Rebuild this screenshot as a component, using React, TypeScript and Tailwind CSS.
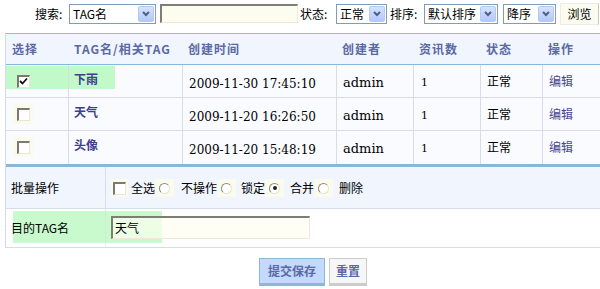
import React from "react";

const cjk = { fontFamily: '"Noto Sans CJK SC", "DejaVu Sans", sans-serif' };
const serif = { fontFamily: '"DejaVu Serif", "Liberation Serif", serif' };

function Select({ label, w }: { label: string; w: string }) {
  return (
    <div className={`${w} h-[20px] border border-[#7f9db9] bg-white flex items-center justify-between pl-[3px] pr-[1px]`}>
      <span className="text-[12px] text-black leading-none" style={cjk}>{label}</span>
      <div className="w-[16px] h-[16px] rounded-[2px] border border-[#b6c9f3] bg-gradient-to-b from-[#d7e3fd] to-[#b3c8f7] flex items-center justify-center">
        <svg width="8" height="6" viewBox="0 0 8 6">
          <path d="M1 1 L4 4 L7 1" stroke="#4d6185" strokeWidth="2" fill="none" />
        </svg>
      </div>
    </div>
  );
}

function Box({ checked }: { checked?: boolean }) {
  return (
    <div className="w-[13px] h-[13px] border-t-2 border-l-2 border-[#7a7a72] border-r border-b border-r-[#e6e6dc] border-b-[#e6e6dc] bg-white flex items-center justify-center">
      {checked && (
        <svg width="9" height="9" viewBox="0 0 9 9">
          <path d="M1 4 L3.5 6.5 L8 1.5" stroke="#111" strokeWidth="1.8" fill="none" />
        </svg>
      )}
    </div>
  );
}

function Radio({ checked }: { checked?: boolean }) {
  return (
    <div className="w-[19px] h-[18px] bg-[#fbfbec] flex items-center justify-center">
      <div className="w-[11px] h-[11px] rounded-full border-[1.5px] border-t-[#8a8a80] border-l-[#8a8a80] border-r-[#e2e2d8] border-b-[#e2e2d8] bg-white flex items-center justify-center">
        {checked && <div className="w-[4px] h-[4px] rounded-full bg-[#222]" />}
      </div>
    </div>
  );
}

const rows = [
  { name: "下雨", date: "2009-11-30 17:45:10", checked: true },
  { name: "天气", date: "2009-11-20 16:26:50", checked: false },
  { name: "头像", date: "2009-11-20 15:48:19", checked: false },
];

export default function App() {
  return (
    <div className="w-[600px] h-[289px] bg-white overflow-hidden text-[12px] text-black" style={cjk}>
      {/* search bar */}
      <div className="h-[33px] flex items-start pt-[4px] pl-[35px]">
        <span className="w-[34px] h-[20px] flex items-center leading-none">搜索:</span>
        <Select label="TAG名" w="w-[87px]" />
        <div className="ml-[4px] w-[138px] h-[19px] border-t-2 border-l-2 border-[#7d7d75] border-r border-b border-r-[#ecebd9] border-b-[#ecebd9] bg-[#fdfdef]" />
        <span className="ml-[2px] w-[36px] h-[20px] flex items-center leading-none">状态:</span>
        <Select label="正常" w="w-[51px]" />
        <span className="ml-[3px] w-[34px] h-[20px] flex items-center leading-none">排序:</span>
        <Select label="默认排序" w="w-[74px]" />
        <div className="ml-[5px]">
          <Select label="降序" w="w-[53px]" />
        </div>
        <div className="ml-[4px] -mt-[1px] w-[39px] h-[22px] bg-[#fbfbef] border border-[#ecece0] border-r-[#c8c8c0] flex items-center justify-center leading-none">
          浏览
        </div>
      </div>

      {/* table */}
      <div className="ml-[5px] w-[600px] border-l border-[#d5dae6] border-t border-t-[#8fbfdc]">
        {/* header */}
        <div className="h-[31px] flex items-center bg-[#f1f5fd] border-b border-[#86b9d9] font-bold text-[#5a69a4]">
          <div className="w-[63px] pl-[6px] tracking-[1px]">选择</div>
          <div className="w-[114px] pl-[5px] tracking-[1px]">TAG名/相关TAG</div>
          <div className="w-[154px] pl-[5px] tracking-[1px]">创建时间</div>
          <div className="w-[77px] pl-[5px] tracking-[1px]">创建者</div>
          <div className="w-[67px] pl-[5px] tracking-[1px]">资讯数</div>
          <div className="w-[62px] pl-[5px] tracking-[1px]">状态</div>
          <div className="flex-1 pl-[5px] tracking-[1px]">操作</div>
        </div>
        {/* rows */}
        {rows.map((r, i) => (
          <div
            key={r.name}
            className={`relative h-[33px] flex bg-[#fafbff] ${i < 2 ? "border-b border-[#d8dce8]" : ""}`}
          >
            {r.checked && (
              <div className="absolute left-0 top-[1px] w-[109px] h-[23px] bg-[#c2f9c8]" />
            )}
            <div className="relative w-[63px] border-r border-[#d8dce8] pl-[7px] pt-[6px]">
              <div className={`w-[20px] h-[20px] flex items-center justify-center ${r.checked ? "" : "bg-[#fbfbec]"}`}>
                <Box checked={r.checked} />
              </div>
            </div>
            <div className="relative w-[114px] border-r border-[#d8dce8] pl-[5px] pt-[5px] font-bold text-[#3e3e8e]">
              {r.name}
            </div>
            <div className="relative w-[154px] border-r border-[#d8dce8] pl-[6px] pt-[10px] text-[12px]" style={serif}>
              {r.date}
            </div>
            <div className="relative w-[77px] border-r border-[#d8dce8] pl-[6px] pt-[8px] text-[13px]" style={serif}>
              admin
            </div>
            <div className="relative w-[67px] border-r border-[#d8dce8] pl-[7px] pt-[10px] text-[11px]" style={serif}>
              1
            </div>
            <div className="relative w-[62px] border-r border-[#d8dce8] pl-[6px] pt-[7px]">正常</div>
            <div className="relative flex-1 pl-[6px] pt-[7px] text-[#46468e]">编辑</div>
          </div>
        ))}
        <div className="h-[3px] bg-[#86b9d9]" />
        {/* batch */}
        <div className="h-[42px] flex bg-[#f1f5fd] border-b border-[#d8dce8]">
          <div className="w-[100px] border-r border-[#d8dce8] pl-[5px] flex items-center">批量操作</div>
          <div className="flex-1 pl-[5px] pt-[12px] flex items-start">
            <div className="w-[17px] h-[18px] bg-[#fbfbec] flex items-center justify-center">
              <Box />
            </div>
            <span className="ml-[3px] h-[18px] flex items-center">全选</span>
            <Radio />
            <span className="ml-[7px] h-[18px] flex items-center">不操作</span>
            <Radio />
            <span className="ml-[5px] h-[18px] flex items-center">锁定</span>
            <Radio checked />
            <span className="ml-[6px] h-[18px] flex items-center">合并</span>
            <Radio />
            <span className="ml-[6px] h-[18px] flex items-center">删除</span>
          </div>
        </div>
        <div className="relative h-[39px] flex bg-white border-b border-[#d8dce8]">
          <div className="absolute left-[7px] top-[2px] w-[149px] h-[32px] bg-[#c2f9c8]/90" />
          <div className="relative w-[100px] border-r border-[#d8dce8]/60 pl-[5px] flex items-center">目的TAG名</div>
          <div className="relative flex-1 pl-[5px] pt-[7px]">
            <div className="w-[199px] h-[23px] border-t-2 border-l-2 border-[#7d7d75] border-r border-b border-r-[#ecebd9] border-b-[#ecebd9] bg-[#fdfdef]/70 pl-[2px] flex items-center">
              天气
            </div>
          </div>
        </div>
      </div>

      {/* buttons */}
      <div className="flex pl-[259px] pt-[10px] gap-[4px]">
        <div className="w-[66px] h-[28px] bg-[#c3d9fe] border border-[#8abad8] border-b-[3px] border-b-[#86b9d9] flex items-center justify-center font-bold text-[#5a69a4]">
          提交保存
        </div>
        <div className="w-[38px] h-[28px] bg-[#f7f7f7] border border-[#cccccc] border-b-[3px] flex items-center justify-center font-bold text-[#5a69a4]">
          重置
        </div>
      </div>
    </div>
  );
}
